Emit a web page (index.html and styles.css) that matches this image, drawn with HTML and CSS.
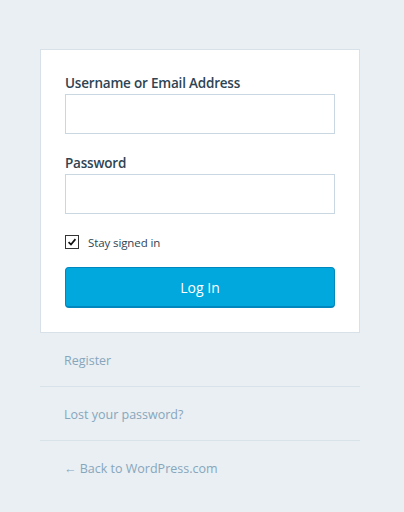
FILE: index.html
```html
<!DOCTYPE html>
<html>
<head>
<meta charset="utf-8">
<link rel="stylesheet" href="styles.css">
</head>
<body>
<div class="wrap">
  <form class="card">
    <label class="label" for="user">Username or Email Address</label>
    <input class="field" id="user" type="text">
    <label class="label pw" for="pass">Password</label>
    <input class="field" id="pass" type="password">
    <div class="remember">
      <span class="check"><svg viewBox="0 0 14 14" width="14" height="14"><path d="M3 7.2 L5.8 10 L11 3.6" fill="none" stroke="#111" stroke-width="2"/></svg></span>
      <span class="remember-text">Stay signed in</span>
    </div>
    <button class="btn" type="button">Log In</button>
  </form>
  <nav class="links">
    <a class="link">Register</a>
    <a class="link">Lost your password?</a>
    <a class="link">← Back to WordPress.com</a>
  </nav>
</div>
</body>
</html>
```
FILE: styles.css
```css
* { box-sizing: border-box; }
html, body { margin: 0; padding: 0; }
body {
  background: #e9eff3;
  font-family: "Open Sans", "Noto Sans", sans-serif;
  width: 404px;
  height: 512px;
  overflow: hidden;
}
.wrap {
  width: 320px;
  margin: 49px 0 0 40px;
}
.card {
  background: #fff;
  border: 1px solid #d8e1e8;
  padding: 24px 24px 24px;
  display: flex;
  flex-direction: column;
}
.label {
  font-size: 13.5px;
  font-weight: 600;
  color: #2e4453;
  line-height: 18px;
  margin-bottom: 2px;
  letter-spacing: -0.2px;
}
.pw { margin-top: 20px; }
.field {
  height: 40px;
  border: 1px solid #c8d7e1;
  background: #fff;
  margin: 0;
  width: 100%;
  outline: none;
}
.remember {
  display: flex;
  align-items: center;
  margin-top: 21px;
  height: 14px;
}
.check {
  width: 14px;
  height: 14px;
  border: 1px solid #333;
  display: flex;
  align-items: center;
  justify-content: center;
  background: #fff;
}
.check svg { display: block; width: 12px; height: 12px; }
.remember-text {
  font-size: 11.5px;
  color: #2e4453;
  margin-left: 9px;
  letter-spacing: -0.1px;
}
.btn {
  margin-top: 18px;
  height: 41px;
  background: #00a8dd;
  border: 1px solid #0087be;
  border-bottom-width: 2px;
  border-radius: 4px;
  color: #fff;
  font-family: inherit;
  font-size: 14px;
  font-weight: 500;
  padding: 0;
}
.links {
  display: flex;
  flex-direction: column;
}
.link {
  display: block;
  height: 54px;
  line-height: 56px;
  padding-left: 24px;
  color: #87a6bc;
  font-size: 12.5px;
  border-bottom: 1px solid #d8e2e9;
}
.link:last-child { border-bottom: none; }
```
